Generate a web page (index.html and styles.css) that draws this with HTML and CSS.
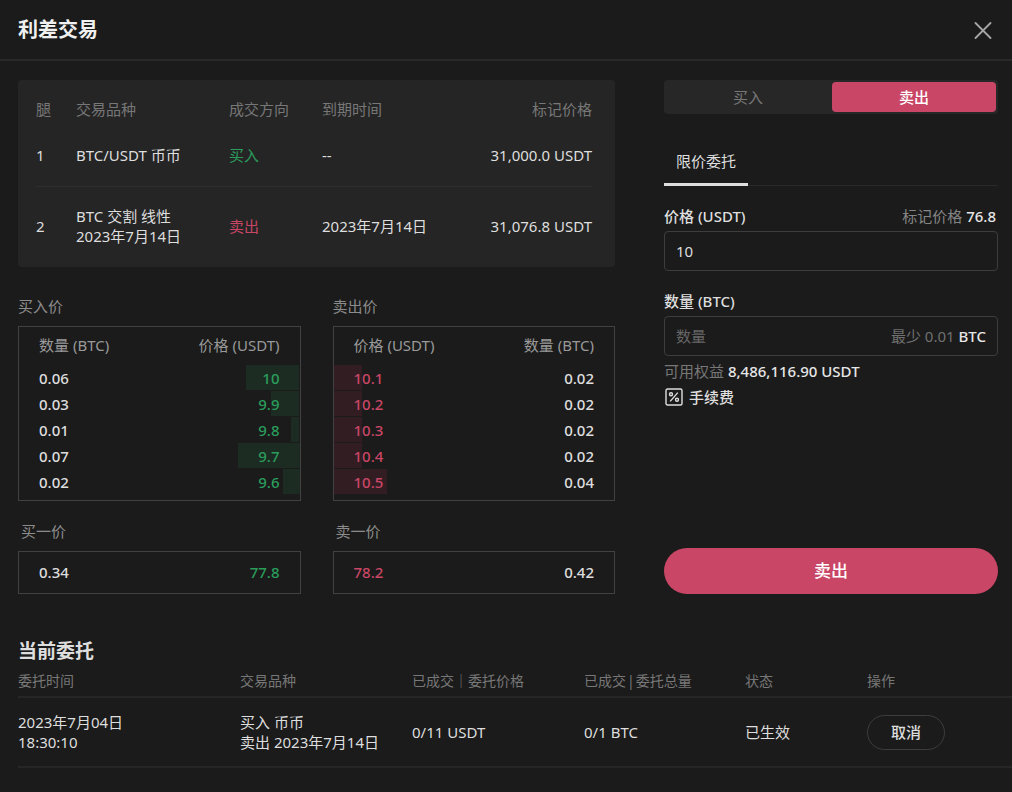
FILE: index.html
```html
<!DOCTYPE html>
<html lang="zh-CN">
<head>
  <meta charset="UTF-8">
  <meta name="viewport" content="width=device-width, initial-scale=1.0">
  <title>利差交易</title>
  <link rel="stylesheet" href="styles.css">
</head>
<body>

  <header class="header">
    <h1>利差交易</h1>
    <button type="button" class="close" aria-label="关闭">
      <svg width="18" height="18" viewBox="0 0 18 18" fill="none" stroke="currentColor" stroke-width="1.8" stroke-linecap="round">
        <path d="M1.5 2l15 15M16.5 2l-15 15"/>
      </svg>
    </button>
  </header>

  <main class="content">
    <section class="market">
      <div class="card">
        <table class="legs">
          <thead>
            <tr>
              <th class="col-leg">腿</th>
              <th class="col-product">交易品种</th>
              <th class="col-side">成交方向</th>
              <th>到期时间</th>
              <th class="right">标记价格</th>
            </tr>
          </thead>
          <tbody>
            <tr class="leg-first">
              <td>1</td>
              <td>BTC/USDT 币币</td>
              <td class="buy">买入</td>
              <td>--</td>
              <td class="right">31,000.0 USDT</td>
            </tr>
            <tr class="leg-second">
              <td>2</td>
              <td>BTC 交割 线性<br>2023年7月14日</td>
              <td class="sell">卖出</td>
              <td>2023年7月14日</td>
              <td class="right">31,076.8 USDT</td>
            </tr>
          </tbody>
        </table>
      </div>

      <div class="books">
        <div class="book">
          <h3>买入价</h3>
          <div class="box">
            <table class="depth bids">
              <thead>
                <tr><th>数量 (BTC)</th><th class="right">价格 (USDT)</th></tr>
              </thead>
              <tbody>
                <tr style="--depth: 19%"><td>0.06</td><td class="right buy">10</td></tr>
                <tr style="--depth: 10%"><td>0.03</td><td class="right buy">9.9</td></tr>
                <tr style="--depth: 3%"><td>0.01</td><td class="right buy">9.8</td></tr>
                <tr style="--depth: 22%"><td>0.07</td><td class="right buy">9.7</td></tr>
                <tr style="--depth: 6%"><td>0.02</td><td class="right buy">9.6</td></tr>
              </tbody>
            </table>
          </div>
          <h3 class="best-title">买一价</h3>
          <div class="box best">
            <span>0.34</span>
            <span class="buy">77.8</span>
          </div>
        </div>

        <div class="book">
          <h3>卖出价</h3>
          <div class="box">
            <table class="depth asks">
              <thead>
                <tr><th>价格 (USDT)</th><th class="right">数量 (BTC)</th></tr>
              </thead>
              <tbody>
                <tr style="--depth: 10%"><td class="sell">10.1</td><td class="right">0.02</td></tr>
                <tr style="--depth: 10%"><td class="sell">10.2</td><td class="right">0.02</td></tr>
                <tr style="--depth: 10%"><td class="sell">10.3</td><td class="right">0.02</td></tr>
                <tr style="--depth: 10%"><td class="sell">10.4</td><td class="right">0.02</td></tr>
                <tr style="--depth: 19%"><td class="sell">10.5</td><td class="right">0.04</td></tr>
              </tbody>
            </table>
          </div>
          <h3 class="best-title">卖一价</h3>
          <div class="box best">
            <span class="sell">78.2</span>
            <span>0.42</span>
          </div>
        </div>
      </div>
    </section>

    <form class="order-form">
      <div class="switch">
        <button type="button">买入</button>
        <button type="button" class="active">卖出</button>
      </div>

      <div class="tabs">
        <button type="button" class="tab">限价委托</button>
      </div>

      <div class="field">
        <div class="field-head">
          <label for="price">价格 (USDT)</label>
          <span class="muted">标记价格 <b>76.8</b></span>
        </div>
        <div class="input-box">
          <input type="text" id="price" name="price" value="10">
        </div>
      </div>

      <div class="field">
        <div class="field-head">
          <label for="amount">数量 (BTC)</label>
        </div>
        <div class="input-box">
          <input type="text" id="amount" name="amount" placeholder="数量">
          <span class="dim">最少 0.01 <b>BTC</b></span>
        </div>
      </div>

      <p class="equity">可用权益 <b>8,486,116.90 USDT</b></p>
      <a href="#" class="fee">
        <svg width="18" height="18" viewBox="0 0 18 18" fill="none" stroke="currentColor" stroke-width="1.4">
          <rect x="1" y="1" width="16" height="16" rx="1.5"/>
          <path d="M12.8 4.6l-7.6 8.8"/>
          <circle cx="6" cy="6.2" r="1.5"/>
          <circle cx="12" cy="11.8" r="1.5"/>
        </svg>
        手续费
      </a>

      <button type="submit" class="submit">卖出</button>
    </form>
  </main>

  <section class="orders">
    <h2>当前委托</h2>
    <table>
      <thead>
        <tr>
          <th class="col-time">委托时间</th>
          <th class="col-name">交易品种</th>
          <th class="col-price">已成交｜委托价格</th>
          <th class="col-total">已成交<span class="bar">|</span>委托总量</th>
          <th class="col-status">状态</th>
          <th>操作</th>
        </tr>
      </thead>
      <tbody>
        <tr>
          <td>2023年7月04日<br>18:30:10</td>
          <td>买入 币币<br>卖出 2023年7月14日</td>
          <td>0/11 USDT</td>
          <td>0/1 BTC</td>
          <td>已生效</td>
          <td><button type="button" class="cancel">取消</button></td>
        </tr>
      </tbody>
    </table>
  </section>

</body>
</html>
```
FILE: styles.css
```css
* {
  margin: 0;
  padding: 0;
  box-sizing: border-box;
}

body {
  background: #1b1b1b;
  color: #dedede;
  font-family: "Noto Sans", "Noto Sans CJK SC", sans-serif;
  font-size: 15px;
  line-height: 20px;
}

button,
input {
  font: inherit;
  color: inherit;
  background: none;
  border: none;
  outline: none;
}

button {
  cursor: pointer;
}

table {
  width: 100%;
  border-collapse: collapse;
}

th {
  font-weight: normal;
  text-align: left;
}

b {
  font-weight: 500;
  color: #e6e6e6;
}

.right {
  text-align: right;
}

.buy {
  color: #2a9d5c;
}

.sell {
  color: #c94666;
}

.muted {
  color: #858585;
}

.dim {
  color: #707070;
}

/* Header */
.header {
  display: flex;
  justify-content: space-between;
  align-items: center;
  height: 61px;
  padding: 0 20px 0 18px;
  border-bottom: 2px solid #292929;
}

.header h1 {
  font-size: 20px;
  line-height: 28px;
  font-weight: 600;
  color: #f0f0f0;
}

.close {
  display: flex;
  color: #a6a6a6;
}

/* Main area */
.content {
  display: grid;
  grid-template-columns: 1fr 334px;
  column-gap: 49px;
  padding: 19px 14px 0 18px;
}

.card {
  padding: 14px 23px 2px 18px;
  background: #252525;
  border-radius: 4px;
}

.legs th {
  height: 30px;
  color: #777;
}

.legs .col-leg {
  width: 40px;
}

.legs .col-product {
  width: 153px;
}

.legs .col-side {
  width: 93px;
}

.leg-first {
  height: 62px;
  border-bottom: 1px solid #2e2e2e;
}

.leg-second {
  height: 79px;
}

/* Order books */
.books {
  display: grid;
  grid-template-columns: 1fr 1fr;
  column-gap: 32px;
  margin-top: 27px;
}

.book h3 {
  margin-bottom: 8px;
  font-size: 15px;
  line-height: 24px;
  font-weight: normal;
  color: #8c8c8c;
}

.book .best-title {
  margin-top: 18px;
  padding-left: 3px;
}

.box {
  border: 1px solid #414141;
  padding-bottom: 5px;
}

.depth th {
  height: 38px;
  padding: 0 20px 2px;
  color: #999;
}

.depth td {
  height: 26px;
  padding: 0 20px;
  font-weight: 500;
}

.depth tbody tr {
  background-repeat: no-repeat;
  background-size: var(--depth) 25px;
}

.bids tbody tr {
  background-image: linear-gradient(#1c2c22, #1c2c22);
  background-position: right top;
}

.asks tbody tr {
  background-image: linear-gradient(#321d23, #321d23);
  background-position: left top;
}

.best {
  display: flex;
  justify-content: space-between;
  align-items: center;
  height: 43px;
  padding: 0 20px 2px;
  font-weight: 500;
}

/* Order form */
.order-form {
  display: flex;
  flex-direction: column;
}

.switch {
  display: grid;
  grid-template-columns: 1fr 1fr;
  column-gap: 2px;
  padding: 2px;
  background: #272727;
  border-radius: 4px;
}

.switch button {
  height: 30px;
  border-radius: 4px;
  color: #777;
}

.switch .active {
  background: #c94666;
  color: #fff;
  font-weight: 500;
}

.tabs {
  display: flex;
  margin-top: 24px;
  box-shadow: inset 0 -1px #292929;
}

.tab {
  height: 48px;
  padding: 0 12px;
  border-bottom: 3px solid #dedede;
}

.field {
  margin-top: 19px;
}

.field-head {
  display: flex;
  justify-content: space-between;
  margin-bottom: 4px;
  padding-right: 2px;
  line-height: 22px;
}

.field-head label {
  font-weight: 500;
}

.input-box {
  display: flex;
  align-items: center;
  height: 40px;
  padding: 0 11px;
  border: 1px solid #3d3d3d;
  border-radius: 4px;
}

.input-box input {
  flex: 1;
  min-width: 0;
}

.input-box input::placeholder {
  color: #666;
}

.equity {
  margin-top: 4px;
  line-height: 22px;
  color: #777;
}

.fee {
  display: flex;
  align-items: center;
  align-self: flex-start;
  gap: 6px;
  margin-top: 4px;
  padding-left: 1px;
  line-height: 22px;
  font-weight: 500;
  color: #dedede;
  text-decoration: none;
}

.submit {
  height: 46px;
  margin-top: auto;
  border-radius: 23px;
  background: #c94666;
  color: #fff;
  font-size: 17px;
  font-weight: 500;
}

/* Current orders */
.orders {
  padding: 43px 0 24px 18px;
}

.orders h2 {
  font-size: 19px;
  line-height: 28px;
  font-weight: 600;
}

.orders tr {
  border-bottom: 2px solid #262626;
}

.orders th {
  height: 32px;
  font-size: 14px;
  color: #777;
}

.orders td {
  height: 70px;
}

.orders .bar {
  margin: 0 1px;
}

.orders .col-time {
  width: 222px;
}

.orders .col-name,
.orders .col-price {
  width: 172px;
}

.orders .col-total {
  width: 161px;
}

.orders .col-status {
  width: 122px;
}

.cancel {
  height: 35px;
  padding: 0 23px;
  border: 1px solid #3d3d3d;
  border-radius: 18px;
  font-weight: 500;
}
```
